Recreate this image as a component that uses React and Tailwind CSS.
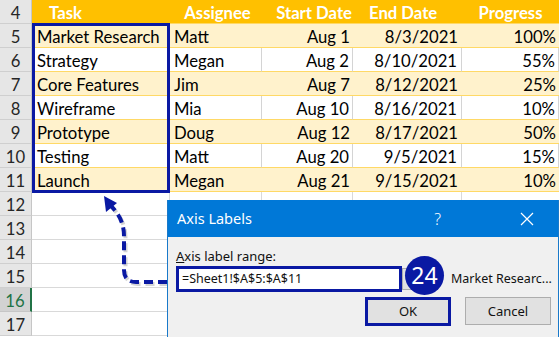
import React from "react";

const rows = [
  ["Market Research", "Matt", "Aug 1", "8/3/2021", "100%"],
  ["Strategy", "Megan", "Aug 2", "8/10/2021", "55%"],
  ["Core Features", "Jim", "Aug 7", "8/12/2021", "25%"],
  ["Wireframe", "Mia", "Aug 10", "8/16/2021", "10%"],
  ["Prototype", "Doug", "Aug 12", "8/17/2021", "50%"],
  ["Testing", "Matt", "Aug 20", "9/5/2021", "15%"],
  ["Launch", "Megan", "Aug 21", "9/15/2021", "10%"],
];

function RowHead({ n, selected }) {
  return (
    <div
      className={
        selected
          ? "h-[24px] pt-[3px] flex items-center justify-center bg-[#d2d2d2] text-[#217346] border-b border-b-[#c6c6c6] border-r-2 border-r-[#217346]"
          : "h-[24px] pt-[3px] flex items-center justify-center bg-[#e6e6e6] text-[#262626] border-b border-b-[#cfcfcf] border-r border-r-[#c6c6c6]"
      }
    >
      {n}
    </div>
  );
}

export default function App() {
  return (
    <div className="relative w-[559px] h-[337px] overflow-hidden bg-white font-['Lato',sans-serif] text-[16.7px] leading-none text-black">
      <div className="grid grid-cols-[32px_138px_92px_91px_109px_97px]">
        <RowHead n={4} />
        <div className="h-[24px] pt-[3px] bg-[#ffc000] border-b border-b-[#ffd966] text-white font-bold flex items-center pl-[17px]">Task</div>
        <div className="h-[24px] pt-[3px] bg-[#ffc000] border-b border-b-[#ffd966] text-white font-bold flex items-center justify-center pl-[3px]">Assignee</div>
        <div className="h-[24px] pt-[3px] bg-[#ffc000] border-b border-b-[#ffd966] text-white font-bold flex items-center justify-end pr-[1px] whitespace-nowrap">Start Date</div>
        <div className="h-[24px] pt-[3px] bg-[#ffc000] border-b border-b-[#ffd966] text-white font-bold flex items-center pl-[16px] whitespace-nowrap">End Date</div>
        <div className="h-[24px] pt-[3px] bg-[#ffc000] border-b border-b-[#ffd966] text-white font-bold flex items-center justify-center">Progress</div>

        {rows.map((r, i) => {
          const band = i % 2 === 0;
          const base = band
            ? "h-[24px] pt-[3px] bg-[#fff2cc] border-b border-b-[#ffd966] flex items-center whitespace-nowrap"
            : "h-[24px] pt-[3px] bg-white border-b border-b-[#ffd966] border-r border-r-[#d4d4d4] flex items-center whitespace-nowrap";
          return (
            <React.Fragment key={i}>
              <RowHead n={i + 5} />
              <div className={base + " pl-[5px]"}>{r[0]}</div>
              <div className={base + " pl-[4px]"}>{r[1]}</div>
              <div className={base + " justify-end pr-[3px]"}>{r[2]}</div>
              <div className={base + " justify-end pr-[4px]"}>{r[3]}</div>
              <div className={base + " justify-end pr-[3px]"}>{r[4]}</div>
            </React.Fragment>
          );
        })}

        {[12, 13, 14, 15, 16, 17].map((n) => (
          <React.Fragment key={n}>
            <RowHead n={n} selected={n === 16} />
            <div className="h-[24px] border-b border-r border-[#d9d9d9]" />
            <div className="h-[24px] border-b border-r border-[#d9d9d9]" />
            <div className="h-[24px] border-b border-r border-[#d9d9d9]" />
            <div className="h-[24px] border-b border-r border-[#d9d9d9]" />
            <div className="h-[24px] border-b border-[#d9d9d9]" />
          </React.Fragment>
        ))}
      </div>

      {/* selection outline A5:A11 */}
      <div className="absolute left-[32px] top-[23px] w-[138px] h-[170px] border-[3px] border-[#0a19a3] pointer-events-none" />

      {/* dashed arrow */}
      <svg className="absolute left-0 top-0 pointer-events-none" width="559" height="337" viewBox="0 0 559 337">
        <g transform="translate(1.5,2)" opacity="0.25">
          <path d="M167 282 L136 282 Q124 282 124 270 L124 236 Q124 218 110 205" fill="none" stroke="#555" strokeWidth="4" strokeDasharray="9 5" />
        </g>
        <path d="M167 282 L136 282 Q124 282 124 270 L124 236 Q124 218 110 205" fill="none" stroke="#0a19a3" strokeWidth="4" strokeDasharray="9 5" />
        <polygon points="104,196 117,203 106,212" fill="#0a19a3" />
      </svg>

      {/* dialog */}
      <div className="absolute left-[167px] top-[200px] w-[392px] h-[140px] bg-[#f0f0f0] border-x border-[#1979ca] font-['Noto_Sans',sans-serif] text-[13px] leading-none">
        <div className="h-[37px] bg-[#0078d7] flex items-center text-white">
          <span className="pl-[9px] text-[14.5px]">Axis Labels</span>
          <span className="ml-auto mr-[79px] text-[16px] font-light">?</span>
          <svg width="14" height="14" viewBox="0 0 14 14" className="mr-[24px]">
            <path d="M1 1 L13 13 M13 1 L1 13" stroke="white" strokeWidth="1.2" />
          </svg>
        </div>
        <div className="pl-[8px] pt-[13px] text-[#111]">
          <div className="h-[15px]"><span className="underline">A</span>xis label range:</div>
          <div className="mt-[1px] flex items-center">
            <div className="w-[226px] h-[26px] border-[3px] border-[#0a19a3] bg-white flex items-center pl-[3px] text-[12.5px]">=Sheet1!$A$5:$A$11</div>
            <div className="w-[10px] h-[22px] bg-[#e1e1e1] border border-[#adadad]" />
            <div className="ml-[39px] text-[12.5px] whitespace-nowrap">Market Researc...</div>
          </div>
          <div className="mt-[5px] flex justify-end pr-[7px] gap-[14px]">
            <div className="w-[86px] h-[29px] border-[3px] border-[#0a19a3] bg-[#e1e1e1] flex items-center justify-center text-[13px]">OK</div>
            <div className="w-[86px] h-[28px] border border-[#adadad] bg-[#e1e1e1] flex items-center justify-center text-[13px]">Cancel</div>
          </div>
        </div>
      </div>

      {/* badge */}
      <div className="absolute left-[405px] top-[256px] w-[39px] h-[39px] rounded-full bg-[#0a19a3] text-white flex items-center justify-center font-['Noto_Sans',sans-serif] text-[23px] leading-none">24</div>
    </div>
  );
}
